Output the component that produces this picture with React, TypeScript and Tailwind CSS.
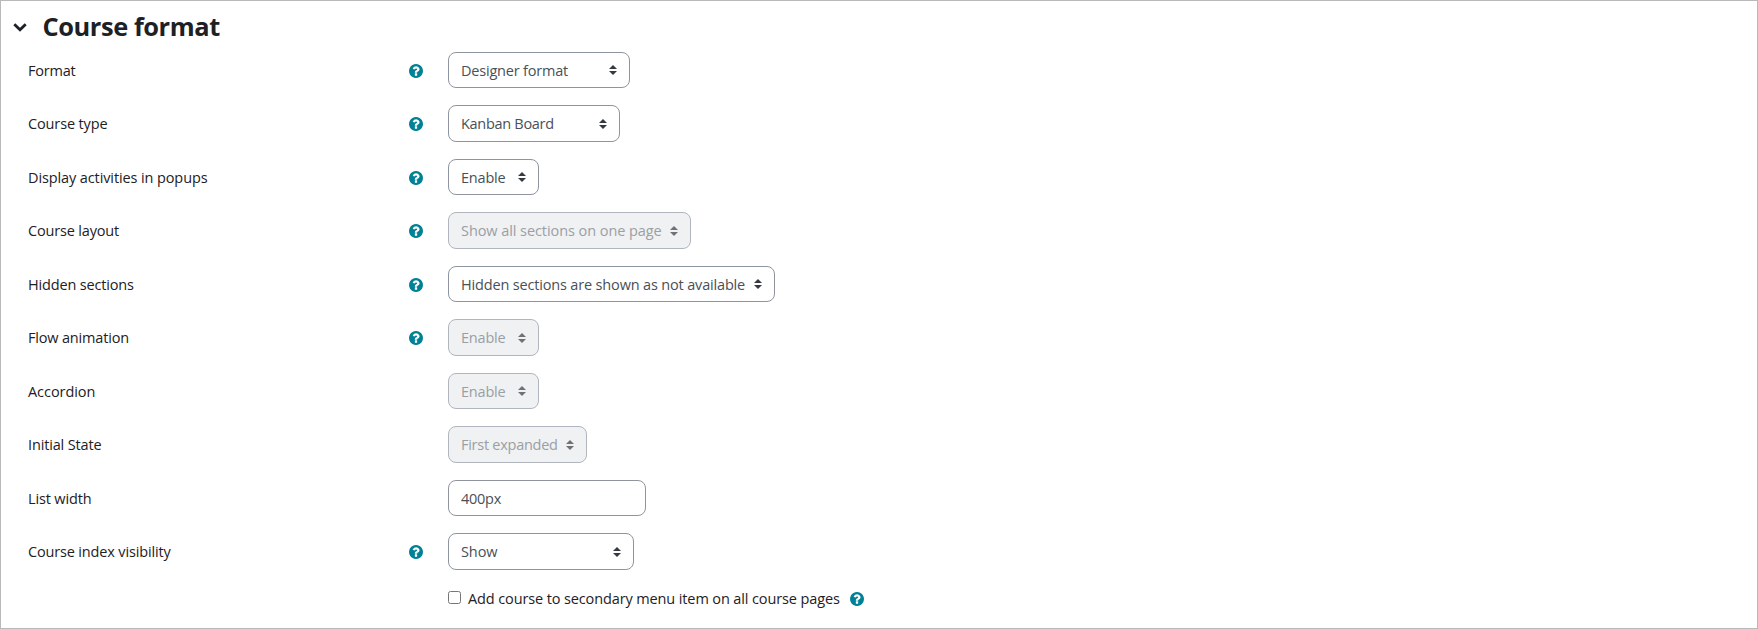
import React from "react";

type Field = {
  label: string;
  labelClass: string;
  value: string;
  valueClass: string;
  width: string;
  help?: boolean;
  disabled?: boolean;
  input?: boolean;
};

const fields: Field[] = [
  { label: "Format", labelClass: "tracking-[-0.21px]", value: "Designer format", valueClass: "tracking-[-0.2px]", width: "w-[182px]", help: true },
  { label: "Course type", labelClass: "tracking-[-0.131px]", value: "Kanban Board", valueClass: "tracking-[-0.3px]", width: "w-[172px]", help: true },
  { label: "Display activities in popups", labelClass: "tracking-[-0.11px]", value: "Enable", valueClass: "tracking-[-0.2px]", width: "w-[91px]", help: true },
  { label: "Course layout", labelClass: "tracking-[-0.174px]", value: "Show all sections on one page", valueClass: "tracking-[-0.07px]", width: "w-[243px]", help: true, disabled: true },
  { label: "Hidden sections", labelClass: "tracking-[-0.16px]", value: "Hidden sections are shown as not available", valueClass: "tracking-[-0.165px]", width: "w-[327px]", help: true },
  { label: "Flow animation", labelClass: "tracking-[-0.18px]", value: "Enable", valueClass: "tracking-[-0.2px]", width: "w-[91px]", help: true, disabled: true },
  { label: "Accordion", labelClass: "tracking-[-0.06px]", value: "Enable", valueClass: "tracking-[-0.2px]", width: "w-[91px]", disabled: true },
  { label: "Initial State", labelClass: "tracking-[-0.15px]", value: "First expanded", valueClass: "tracking-[-0.26px]", width: "w-[139px]", disabled: true },
  { label: "List width", labelClass: "tracking-[-0.15px]", value: "400px", valueClass: "tracking-[-0.267px]", width: "w-[198px]", input: true },
  { label: "Course index visibility", labelClass: "tracking-[-0.16px]", value: "Show", valueClass: "tracking-[-0.076px]", width: "w-[186px]", help: true },
];

function Help() {
  return (
    <svg viewBox="128 128 1536 1536" className="size-[14px] shrink-0 fill-[#008196]">
      <path d="M1024 1376v-192q0-14-9-23t-23-9h-192q-14 0-23 9t-9 23v192q0 14 9 23t23 9h192q14 0 23-9t9-23zm256-672q0-88-55.5-163t-138.5-116-170-41q-243 0-371 213-15 24 8 42l132 100q7 6 19 6 16 0 25-12 53-68 86-92 34-24 86-24 48 0 85.5 26t37.5 59q0 38-20 61t-68 45q-63 28-115.5 86.5t-52.5 125.5v36q0 14 9 23t23 9h192q14 0 23-9t9-23q0-19 21.5-49.5t54.5-49.5q32-18 49-28.5t46-35 44.5-48 28-60.5 12.5-81zm384 192q0 209-103 385.5t-279.5 279.5-385.5 103-385.5-103-279.5-279.5-103-385.5 103-385.5 279.5-279.5 385.5-103 385.5 103 279.5 279.5 103 385.5z" />
    </svg>
  );
}

function Arrows({ disabled }: { disabled?: boolean }) {
  return (
    <svg viewBox="0 0 4 5" className={disabled ? "h-[10px] w-[8px] shrink-0 fill-[#6e7276]" : "h-[10px] w-[8px] shrink-0 fill-[#343a40]"}>
      <path d="M2 0L0 2h4zm0 5L0 3h4z" />
    </svg>
  );
}

function Control({ field }: { field: Field }) {
  const base = "flex h-[36.5px] items-center justify-between rounded-[8px] border px-[12px] whitespace-nowrap";
  const tone = field.disabled
    ? "border-[#b1b5bd] bg-[#f0f1f3] text-[#9a9fa4]"
    : "border-[#8f959e] bg-white text-[#495057]";
  return (
    <div className={`${base} ${tone} ${field.width}`}>
      <span className={`pt-[1px] ${field.valueClass}`}>{field.value}</span>
      {!field.input && <Arrows disabled={field.disabled} />}
    </div>
  );
}

export default function App() {
  return (
    <div className="h-[629px] w-[1758px] overflow-hidden border border-[#b9b9b9] bg-white font-['Open_Sans',sans-serif] text-[14.5px] leading-[22px] text-[#1d2125]">
      <div className="flex h-[50.75px] items-center pl-[11px]">
        <svg viewBox="0 0 16 12" className="mt-[1px] h-[12px] w-[16px] fill-none stroke-[#1d2125] stroke-[2.8]">
          <path d="M2.3 3.2L8 8.8L13.7 3.2" />
        </svg>
        <h3 className="pl-[14.5px] text-[25.4px] leading-[32px] font-bold tracking-[-0.42px]">Course format</h3>
      </div>
      <div className="flex flex-col gap-[17px]">
        {fields.map((field) => (
          <div key={field.label} className="flex h-[36.5px] items-center">
            <div className="flex w-[447px] items-center justify-between pr-[25px] pl-[27px]">
              <span className={`pt-[1px] ${field.labelClass}`}>{field.label}</span>
              {field.help && <span className="pt-[1px]"><Help /></span>}
            </div>
            <Control field={field} />
          </div>
        ))}
      </div>
      <div className="mt-[17px] flex h-[22px] items-center pl-[447px]">
        <span className="-mt-[1px] size-[13px] rounded-[2.5px] border border-[#767676] bg-white" />
        <span className="ml-[7px] pt-[2px] tracking-[-0.12px]">Add course to secondary menu item on all course pages</span>
        <span className="ml-[10px] pt-[2px]"><Help /></span>
      </div>
    </div>
  );
}
